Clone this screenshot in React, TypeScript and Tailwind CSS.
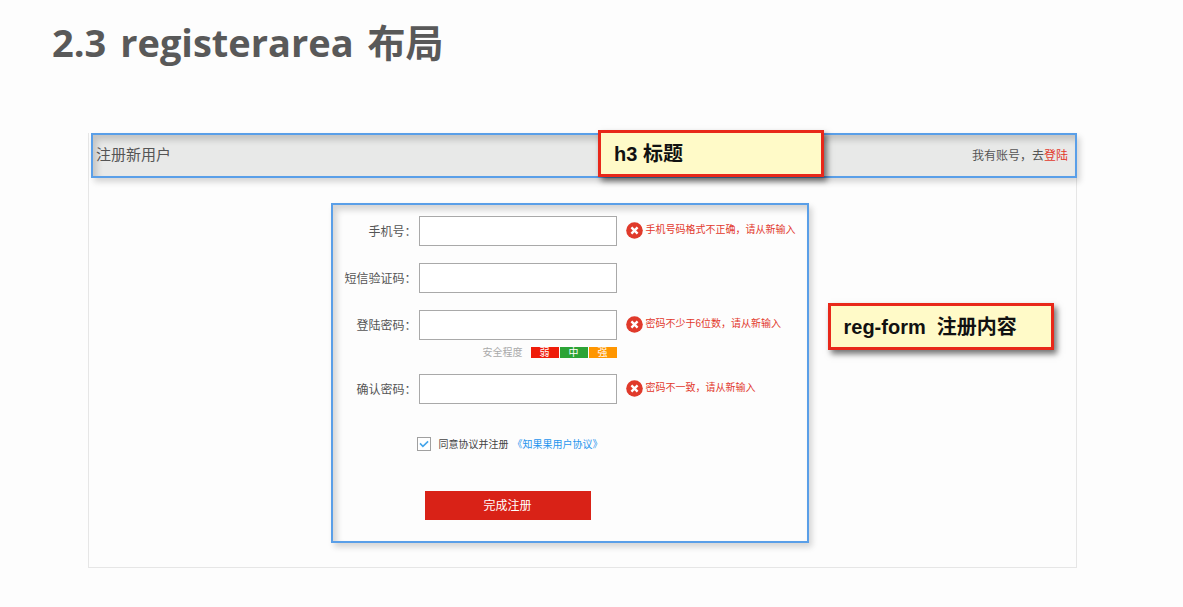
import type { ReactNode } from "react";

const frame =
  "border-2 border-[#5a9fe8] shadow-[3px_4px_6px_rgba(0,0,0,0.16),inset_4px_5px_6px_rgba(0,0,0,0.16)]";

function ErrorMessage({ id, children }: { id: string; children: ReactNode }) {
  return (
    <div id={id} role="alert" className="flex items-center gap-[3px] pb-[2px] pl-[9px] text-[10px] leading-4 whitespace-nowrap text-[#e2392c]">
      <svg viewBox="0 0 17 17" className="size-[17px] shrink-0" aria-hidden="true">
        <circle cx="8.5" cy="8.5" r="8.3" fill="#e03a2b" />
        <path d="M5.4 5.4l6.2 6.2M11.6 5.4l-6.2 6.2" stroke="#fff" strokeWidth="2.4" />
      </svg>
      <p>{children}</p>
    </div>
  );
}

function Field({ id, label, type, error }: { id: string; label: string; type: string; error?: string }) {
  return (
    <div className="flex items-center">
      <label htmlFor={id} className="mr-[2px] w-[82px] shrink-0 pt-px text-right text-xs whitespace-nowrap text-[#555]">
        {label}
      </label>
      <input
        id={id}
        type={type}
        aria-describedby={error ? `${id}-error` : undefined}
        className="h-[30px] w-[198px] shrink-0 border border-[#a9a9a9] bg-white px-2 text-xs outline-none focus:border-[#549be6]"
      />
      {error && <ErrorMessage id={`${id}-error`}>{error}</ErrorMessage>}
    </div>
  );
}

function Callout({ className, children }: { className: string; children: ReactNode }) {
  return (
    <div
      className={`absolute flex h-[47px] w-[226px] items-center border-[3px] border-[#e8281a] bg-[#fffac8] pl-[13px] text-xl font-bold whitespace-pre text-[#111] shadow-[3px_4px_6px_rgba(0,0,0,0.55)] ${className}`}
    >
      {children}
    </div>
  );
}

export default function App() {
  return (
    <main className="min-h-screen bg-[#fdfdfd] pb-10 font-['Liberation_Sans','Noto_Sans_CJK_SC',sans-serif]">
      <h1 className="pt-[14px] pl-[52px] font-['Open_Sans','Noto_Sans_CJK_SC',sans-serif] text-[38px] leading-[56px] font-bold text-[#595959]">
        <span className="mr-1">2.3</span> <span className="mr-1">registerarea</span> 布局
      </h1>

      <section className="mt-[63px] mr-[106px] ml-[88px] border border-t-0 border-[#e6e6e6] pb-6">
        <header className={`relative -mr-px ml-[2px] flex h-[45px] items-center justify-between bg-[#e8e9e8] pr-[7px] pl-[3px] ${frame}`}>
          <h3 className="text-[15px] text-[#555]">注册新用户</h3>
          <p className="text-xs text-[#555]">
            我有账号，去
            <a href="#login" className="text-[#e2392c]">登陆</a>
          </p>
          <Callout className="-top-[5px] left-[505px]">h3 标题</Callout>
        </header>

        <div className="mt-[25px] flex justify-center pr-[26px]">
          <form className={`relative w-[478px] pt-[11px] pb-[21px] pl-[2px] ${frame}`}>
            <div className="flex flex-col gap-[17px]">
              <Field id="phone" label="手机号：" type="tel" error="手机号码格式不正确，请从新输入" />
              <Field id="code" label="短信验证码：" type="text" />
              <Field id="password" label="登陆密码：" type="password" error="密码不少于6位数，请从新输入" />
            </div>
            <div className="mt-[2px] mb-3 ml-[148px] flex h-5 items-center text-[10px]">
              <span className="mr-2 text-[#aaa]">安全程度</span>
              <span className="flex gap-px text-center leading-[11px] text-white">
                <span className="h-[11px] w-7 overflow-hidden bg-[#ef1c0a]">弱</span>
                <span className="h-[11px] w-7 overflow-hidden bg-[#2ca336]">中</span>
                <span className="h-[11px] w-7 overflow-hidden bg-[#ff9600]">强</span>
              </span>
            </div>
            <Field id="confirm" label="确认密码：" type="password" error="密码不一致，请从新输入" />

            <div className="mt-8 ml-[82px] flex h-4 items-center text-[10px]">
              <span className="relative mr-2 flex size-[14px]">
                <input
                  id="agree"
                  type="checkbox"
                  defaultChecked
                  className="peer size-[14px] appearance-none border border-[#a0a0a0] bg-white"
                />
                <svg
                  viewBox="0 0 14 14"
                  className="pointer-events-none absolute inset-0 hidden peer-checked:block"
                  fill="none"
                  stroke="#45a5ea"
                  strokeWidth="1.6"
                  aria-hidden="true"
                >
                  <path d="M3 6.4l2.9 2.9 5.2-4.9" />
                </svg>
              </span>
              <label htmlFor="agree" className="text-[#444]">同意协议并注册</label>
              <a href="#agreement" className="ml-1 text-[#1f95ee]">《知果果用户协议》</a>
            </div>

            <button type="submit" className="mt-[39px] ml-[90px] block h-[29px] w-[166px] bg-[#d92217] text-xs text-white">
              完成注册
            </button>
            <Callout className="top-[98px] left-[495px]">reg-form  注册内容</Callout>
          </form>
        </div>
      </section>
    </main>
  );
}
